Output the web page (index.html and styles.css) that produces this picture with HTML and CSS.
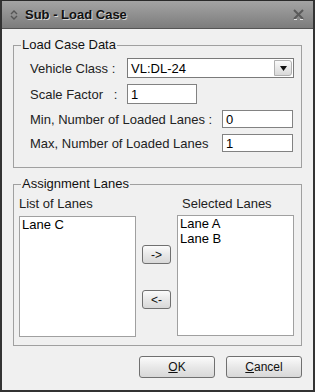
FILE: index.html
```html
<!DOCTYPE html>
<html lang="en">

<head>
  <meta charset="UTF-8">
  <title>Sub - Load Case</title>
  <link rel="stylesheet" href="styles.css">
</head>

<body>
  <div class="window">
    <div class="titlebar">
      <svg class="title-icon" width="8" height="10" viewBox="0 0 8 10">
        <path d="M1 4 L4 1 L7 4" fill="none" stroke="#555" stroke-width="1.4" />
        <path d="M1 6 L4 9 L7 6" fill="none" stroke="#555" stroke-width="1.4" />
      </svg>
      <span class="title-text">Sub - Load Case</span>
      <svg class="close-icon" width="11" height="11" viewBox="0 0 11 11">
        <path d="M1 1 L10 10 M10 1 L1 10" stroke="#5a5a5a" stroke-width="2" />
        <path d="M1 10.5 L4 10.5 M7 10.5 L10 10.5" stroke="#e0e0e0" stroke-width="1" />
      </svg>
    </div>

    <div class="content">
      <fieldset class="group group-data">
        <legend>Load Case Data</legend>
        <div class="rows">
          <div class="row row-tall">
            <label class="lbl-vehicle">Vehicle Class :</label>
            <div class="select">
              <span>VL:DL-24</span>
              <span class="select-btn">
                <svg width="7" height="5" viewBox="0 0 7 5"><path d="M0 0 H7 L3.5 5 Z" fill="#111" /></svg>
              </span>
            </div>
          </div>
          <div class="row row-tall">
            <label class="lbl-scale">Scale Factor&nbsp;&nbsp;&nbsp;:</label>
            <div class="input input-scale">1</div>
          </div>
          <div class="row">
            <label class="lbl-lanes">Min, Number of Loaded Lanes :</label>
            <div class="input input-lanes">0</div>
          </div>
          <div class="row">
            <label class="lbl-lanes">Max, Number of Loaded Lanes</label>
            <div class="input input-lanes">1</div>
          </div>
        </div>
      </fieldset>

      <fieldset class="group group-lanes">
        <legend>Assignment Lanes</legend>
        <div class="lanes">
          <div class="lanes-label">List of Lanes</div>
          <div></div>
          <div class="lanes-label lanes-label-right">Selected Lanes</div>
          <div class="listbox">
            <div>Lane C</div>
          </div>
          <div class="move-btns">
            <button class="btn btn-small">-&gt;</button>
            <button class="btn btn-small">&lt;-</button>
          </div>
          <div class="listbox listbox-right">
            <div>Lane A</div>
            <div>Lane B</div>
          </div>
        </div>
      </fieldset>

      <div class="footer">
        <button class="btn btn-main"><u>O</u>K</button>
        <button class="btn btn-main"><u>C</u>ancel</button>
      </div>
    </div>
  </div>
</body>

</html>
```

FILE: styles.css
```css
body {
  margin: 0;
  font-family: "Liberation Sans", Arial, sans-serif;
  font-size: 13px;
  color: #000;
  background: #f0f0f0;
}

.window {
  width: 315px;
  height: 392px;
  box-sizing: border-box;
  border: 2px solid #333;
  border-top: 1px solid #2a2a2a;
  background: #f0f0f0;
  display: flex;
  flex-direction: column;
}

.titlebar {
  height: 27px;
  border-bottom: 1px solid #555;
  background: linear-gradient(#a4a4a4, #7c7c7c);
  display: flex;
  align-items: center;
}

.title-icon {
  margin-left: 8px;
  margin-right: 7px;
}

.title-text {
  font-weight: bold;
  font-size: 13px;
  color: #111;
  text-shadow: 1px 1px 0 #d8d8d8;
  flex: 1;
}

.close-icon {
  margin-right: 9px;
}

.content {
  flex: 1;
  padding: 9px 11px 0 11px;
}

.group {
  margin: 0;
  padding: 0;
  min-width: 0;
  border: 1px solid #a0a0a0;
}

.group legend {
  margin-left: 7px;
  padding: 0 1px;
  line-height: 14px;
  color: #111;
}

.rows {
  display: flex;
  flex-direction: column;
  gap: 6px;
  padding: 6px 0 15px 16px;
}

.row {
  display: flex;
  align-items: center;
  height: 18px;
}

.row-tall {
  height: 20px;
}

.row label {
  color: #222;
}

.lbl-vehicle,
.lbl-scale {
  width: 97px;
}

.lbl-lanes {
  width: 192px;
}

.select {
  width: 167px;
  height: 20px;
  box-sizing: border-box;
  border: 1px solid #7a7a7a;
  background: #fff;
  display: flex;
  align-items: center;
  justify-content: space-between;
  padding-left: 3px;
}

.select-btn {
  width: 18px;
  height: 16px;
  margin-right: 1px;
  border: 1px solid #b0b0b0;
  border-radius: 0 3px 3px 0;
  box-sizing: border-box;
  background: linear-gradient(#fafafa, #d8d8d8);
  display: flex;
  align-items: center;
  justify-content: center;
}

.input {
  box-sizing: border-box;
  border: 1px solid #828282;
  background: #fff;
  padding-left: 3px;
  display: flex;
  align-items: center;
}

.input-scale {
  width: 70px;
  height: 20px;
}

.input-lanes {
  width: 71px;
  height: 18px;
}

.group-lanes {
  margin-top: 9px;
}

.lanes {
  display: grid;
  grid-template-columns: 117px 29px 117px;
  column-gap: 6px;
  padding: 5px 8px 8px 5px;
}

.lanes-label {
  height: 16px;
  line-height: 16px;
  margin-bottom: 4px;
  color: #222;
}

.lanes-label-right {
  padding-left: 5px;
}

.listbox {
  height: 121px;
  box-sizing: border-box;
  border: 1px solid #a0a0a0;
  background: #fff;
  padding: 0 2px;
  line-height: 15px;
}

.listbox-right {
  margin-top: -1px;
}

.move-btns {
  display: flex;
  flex-direction: column;
  gap: 26px;
  padding-top: 29px;
}

.btn {
  font-family: "Liberation Sans", Arial, sans-serif;
  font-size: 12px;
  color: #111;
  border: 1px solid #707070;
  border-radius: 3px;
  background: linear-gradient(#fbfbfb, #e8e8e8 50%, #d8d8d8);
  padding: 0;
}

.btn-small {
  width: 29px;
  height: 19px;
}

.footer {
  display: flex;
  justify-content: flex-end;
  gap: 11px;
  margin-top: 10px;
}

.btn-main {
  width: 76px;
  height: 22px;
}
```
